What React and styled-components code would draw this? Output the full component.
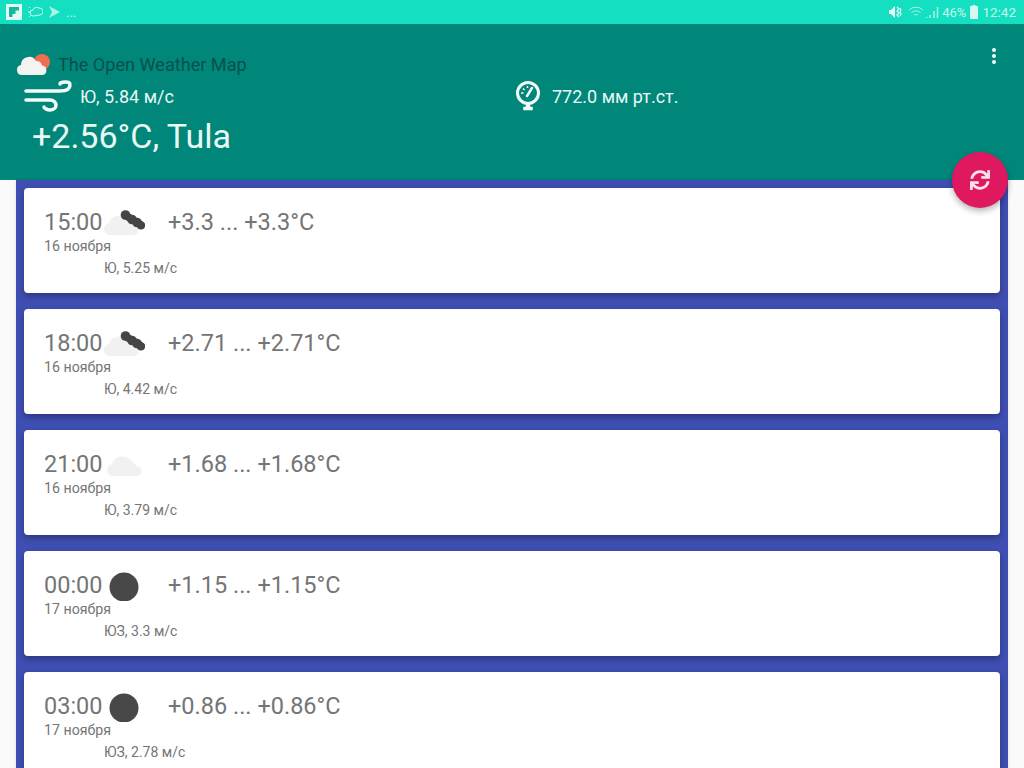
import React from 'react';
import styled, { createGlobalStyle } from 'styled-components';
import { FaSync } from 'react-icons/fa';

const GlobalStyle = createGlobalStyle`
    html, body {
        margin: 0;
        height: 100%;
        overflow: hidden;
        background: #fafafa;
        font-family: Roboto, "Noto Sans", sans-serif;
    }
`;

const Page = styled.div`
    position: relative;
    width: 1024px;
    height: 768px;
    overflow: hidden;
    background: #fafafa;
`;

const StatusBar = styled.div`
    height: 24px;
    display: flex;
    align-items: center;
    justify-content: space-between;
    padding: 0 8px 0 6px;
    background: #14dfc0;
    color: #c9f7ee;
    font-size: 13px;
`;

const StatusGroup = styled.div`
    display: flex;
    align-items: center;
    gap: ${(p) => p.$gap || 4}px;
`;

const StatusIcon = styled.svg`
    margin-left: ${(p) => p.$offset || 0}px;
`;

const Clock = styled.span`
    margin-left: 1px;
    font-size: 13.5px;
`;

const Header = styled.header`
    height: 156px;
    box-sizing: border-box;
    padding: 26px 0 0 17px;
    background: #00877a;
    color: #e9f8f5;
`;

const Brand = styled.div`
    height: 28px;
    display: flex;
    align-items: center;
    gap: 7px;
`;

const Title = styled.h1`
    margin: 0;
    font-size: 18.1px;
    font-weight: 400;
    color: #07504d;
`;

const Stats = styled.div`
    display: grid;
    grid-template-columns: 491px auto;
    justify-content: start;
    margin-top: 2px;
    padding-left: 7px;
`;

const Stat = styled.div`
    height: 32px;
    display: flex;
    align-items: center;
    gap: ${(p) => p.$gap}px;
    font-size: 18px;
`;

const CurrentTemp = styled.div`
    margin: 5px 0 0 15px;
    font-size: 34px;
    line-height: 38px;
`;

const MenuButton = styled.div`
    position: absolute;
    top: 48px;
    left: 992px;
    display: flex;
    flex-direction: column;
    gap: 2px;
`;

const MenuDot = styled.span`
    width: 4px;
    height: 4px;
    border-radius: 50%;
    background: #f2fbf9;
`;

const Fab = styled.button`
    position: absolute;
    top: 152px;
    left: 952px;
    width: 56px;
    height: 56px;
    display: flex;
    align-items: center;
    justify-content: center;
    padding: 0;
    border: none;
    border-radius: 50%;
    background: #e0185f;
    color: #fbe3ec;
    box-shadow: 0 3px 6px rgba(0, 0, 0, 0.3);
`;

const Forecast = styled.main`
    margin: 0 16px;
    padding: 8px 8px 0;
    display: flex;
    flex-direction: column;
    gap: 16px;
    height: 580px;
    background: #3f4eb2;
    box-shadow: 0 0 3px rgba(0, 0, 0, 0.12);
`;

const Card = styled.article`
    flex: none;
    height: 105px;
    box-sizing: border-box;
    padding: 18px 20px 0;
    display: grid;
    grid-template-columns: 60px 64px auto;
    grid-template-rows: 32px 16px 28px;
    justify-content: start;
    background: #fff;
    border-radius: 4px;
    box-shadow: 0 3px 6px rgba(0, 0, 0, 0.3);
    color: #757575;
`;

const Time = styled.div`
    font-size: 23.5px;
    line-height: 32px;
`;

const IconCell = styled.div`
    display: flex;
    align-items: center;
`;

const Range = styled.div`
    font-size: 23.5px;
    line-height: 32px;
`;

const DateLine = styled.div`
    grid-column: 1 / 3;
    font-size: 14.2px;
    line-height: 16px;
`;

const WindLine = styled.div`
    grid-column: 2 / 4;
    grid-row: 3;
    font-size: 14px;
    line-height: 16px;
    margin-top: 6px;
`;

const BrandIcon = () => (
    <svg width="34" height="26" viewBox="0 0 34 26">
        <circle cx="25" cy="11" r="8" fill="#ee6e4d" />
        <path
            d="M5 24a5 5 0 0 1-1-9.900A8 8 0 0 1 19 10a5.500 5.500 0 0 1 6 4.500 4.800 4.800 0 0 1 .5 9.500z"
            fill="#f3f4f2"
        />
    </svg>
);

const WindIcon = () => (
    <svg width="48" height="32" viewBox="0 0 48 32" fill="none" stroke="#f4fbfa" strokeWidth="3.500" strokeLinecap="round">
        <path d="M2 11H36C44 11 46 8 46 5C46 2 44 2 41 2C38 2 36 3 36 4" />
        <path d="M2 20H26C30 20 32 23 32 25C32 28 29 30 26 30C23 30 20 28 20 27" />
    </svg>
);

const GaugeIcon = () => (
    <svg width="26" height="30" viewBox="0 0 26 30" fill="none" stroke="#f4fbfa">
        <circle cx="13" cy="12" r="10.500" strokeWidth="3" />
        <path d="M11 23h4v3h-4z M8.500 26h9v3h-9z" fill="#f4fbfa" strokeWidth="0.500" />
        <path d="M12 15l5-8" strokeWidth="2.500" strokeLinecap="round" />
        <path d="M6 12h2.500M8 7.500l1.500 1.500M12.500 5v2" strokeWidth="1.500" />
    </svg>
);

const CloudShape = ({ shift }) => (
    <path
        d="M6 29a6 6 0 0 1-1-11.900A11 11 0 0 1 25 15a7 7 0 0 1 4 4 5 5 0 0 1 1 10z"
        fill="#f1f1f1"
        transform={shift ? 'translate(3 -1)' : undefined}
    />
);

const WeatherIcon = ({ kind }) => {
    if (kind === 'dark') {
        return (
            <svg width="42" height="32" viewBox="0 0 42 32">
                <circle cx="20" cy="18" r="14.500" fill="#484848" />
            </svg>
        );
    }
    if (kind === 'cloud') {
        return (
            <svg width="42" height="32" viewBox="0 0 42 32">
                <CloudShape shift />
            </svg>
        );
    }
    return (
        <svg width="42" height="32" viewBox="0 0 42 32">
            <CloudShape />
            <path d="M21 9L37 19" stroke="#454545" strokeWidth="7.500" strokeLinecap="round" />
            <circle cx="21.500" cy="9" r="4.800" fill="#454545" />
            <circle cx="28" cy="13.500" r="4.800" fill="#454545" />
            <circle cx="33" cy="16.500" r="4.800" fill="#454545" />
            <circle cx="37" cy="19.500" r="4" fill="#454545" />
        </svg>
    );
};

const forecast = [
    { time: '15:00', icon: 'cloudy', temp: '+3.3 ... +3.3°C', date: '16 ноября', wind: 'Ю, 5.25 м/с' },
    { time: '18:00', icon: 'cloudy', temp: '+2.71 ... +2.71°C', date: '16 ноября', wind: 'Ю, 4.42 м/с' },
    { time: '21:00', icon: 'cloud', temp: '+1.68 ... +1.68°C', date: '16 ноября', wind: 'Ю, 3.79 м/с' },
    { time: '00:00', icon: 'dark', temp: '+1.15 ... +1.15°C', date: '17 ноября', wind: 'ЮЗ, 3.3 м/с' },
    { time: '03:00', icon: 'dark', temp: '+0.86 ... +0.86°C', date: '17 ноября', wind: 'ЮЗ, 2.78 м/с' },
];

const App = () => (
    <Page>
        <GlobalStyle />
        <StatusBar>
            <StatusGroup $gap={5}>
                <svg width="16" height="16" viewBox="0 0 16 16">
                    <rect width="16" height="16" fill="#e3faf6" />
                    <path d="M3 3h10v3.500H9.500V10H6.500v3H3z" fill="#14b89f" />
                </svg>
                <svg width="16" height="14" viewBox="0 0 16 14" fill="none" stroke="#d6f8f1">
                    <path d="M6 11a3 3 0 0 1 0-6 4 4 0 0 1 6-2 3.500 3.500 0 0 1 1 7z" />
                    <path d="M1 7h2M2 2l1 1M2 12l1-1" />
                </svg>
                <svg width="13" height="14" viewBox="0 0 13 14">
                    <path d="M1 1l11 6-11 6 3-6z" fill="#a9f2e5" />
                </svg>
                <span>...</span>
            </StatusGroup>
            <StatusGroup $gap={3}>
                <svg width="14" height="14" viewBox="0 0 14 14" fill="#e3faf6">
                    <path d="M1 5h2l4-4v12l-4-4H1z" />
                    <path d="M9 2l2 2-2 2 2 2-2 2 2 2M12 3l1 2-1 2 1 2-1 2" fill="none" stroke="#e3faf6" strokeWidth="1.200" />
                </svg>
                <StatusIcon $offset={3} width="31" height="14" viewBox="0 0 31 14" fill="none" stroke="#a9f2e5">
                    <path d="M1 5a10 10 0 0 1 14 0M3.500 7.500a7 7 0 0 1 9 0M6 10a3.500 3.500 0 0 1 4 0" />
                    <path d="M19 13v-1M22 13v-3M26 13V6M29.500 13V2" strokeWidth="1.500" />
                </StatusIcon>
                <span>46%</span>
                <StatusIcon $offset={1} width="8" height="14" viewBox="0 0 8 14">
                    <path d="M2.500 0h3v1H8v13H0V1h2.500z" fill="#d6f8f1" />
                </StatusIcon>
                <Clock>12:42</Clock>
            </StatusGroup>
        </StatusBar>
        <Header>
            <Brand>
                <BrandIcon />
                <Title>The Open Weather Map</Title>
            </Brand>
            <Stats>
                <Stat $gap={8}>
                    <WindIcon />
                    Ю, 5.84 м/с
                </Stat>
                <Stat $gap={11}>
                    <GaugeIcon />
                    772.0 мм рт.ст.
                </Stat>
            </Stats>
            <CurrentTemp>+2.56°C, Tula</CurrentTemp>
        </Header>
        <MenuButton>
            <MenuDot />
            <MenuDot />
            <MenuDot />
        </MenuButton>
        <Fab>
            <FaSync size={20} />
        </Fab>
        <Forecast>
            {forecast.map((item) => (
                <Card key={item.time}>
                    <Time>{item.time}</Time>
                    <IconCell>
                        <WeatherIcon kind={item.icon} />
                    </IconCell>
                    <Range>{item.temp}</Range>
                    <DateLine>{item.date}</DateLine>
                    <WindLine>{item.wind}</WindLine>
                </Card>
            ))}
        </Forecast>
    </Page>
);

export default App;
